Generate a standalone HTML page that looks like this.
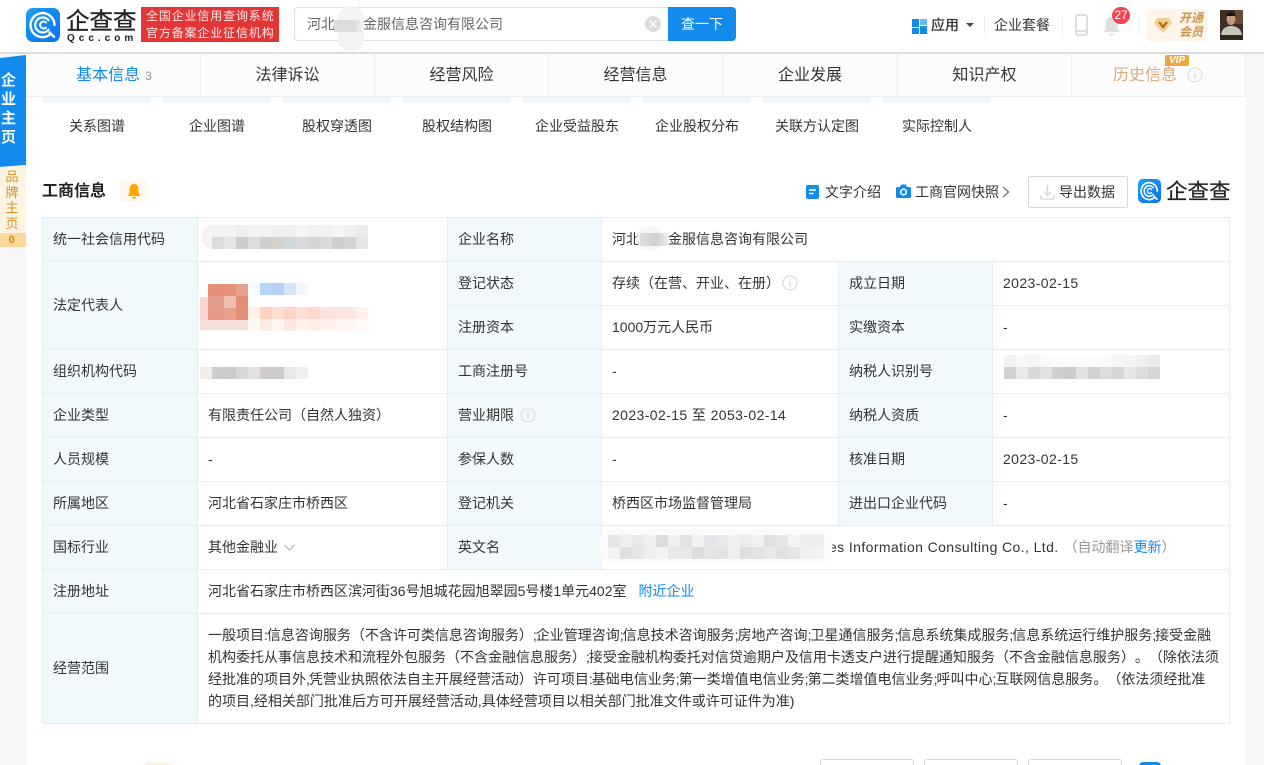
<!DOCTYPE html>
<html lang="zh-CN">
<head>
<meta charset="utf-8">
<title>工商信息</title>
<style>
*{box-sizing:border-box}
html,body{margin:0;padding:0;width:1264px;height:765px;overflow:hidden;background:#f6f6f6}
body{position:relative;font-family:"Liberation Sans","Noto Sans CJK SC",sans-serif;font-size:14px;color:#333;text-spacing-trim:space-all}
.a{position:absolute;white-space:nowrap}
.m{position:absolute;display:flex;flex-wrap:wrap;filter:blur(.3px)}
.m i{display:block;width:12px;height:12px}
#hd{position:absolute;left:0;top:0;width:1264px;height:54px;background:#fff;border-bottom:2px solid #dcdcdc}
#main{position:absolute;left:26px;top:54px;width:1220px;height:711px;background:#fff}
.tab{position:absolute;top:54px;height:43px;line-height:44px;text-align:center;font-size:16px;background:#fcfcfc;border-right:1px solid #eee;border-bottom:1px solid #eee}
.bar{position:absolute;top:97px;width:108px;height:6px;background:#f1f8fd}
.sub{position:absolute;top:116px;width:108px;text-align:center;line-height:20px;white-space:nowrap}
table{position:absolute;left:42px;top:217px;width:1187px;border-collapse:collapse;table-layout:fixed}
td{border:1px solid #e4eef6;height:44px;padding:0 10px 2px;line-height:22px;white-space:nowrap;overflow:visible}
td.l{background:#f2f9fc}
.lnk{color:#128bed}
.d{letter-spacing:.4px}
b.p{font-weight:normal;letter-spacing:-1px}
.btm{position:absolute;top:759px;height:8px;width:94px;background:#fff;border:1px solid #d8d8d8;border-radius:3px 3px 0 0}
</style>
</head>
<body>
<div id="main"></div>

<div id="hd"></div>
<svg class="a" style="left:26px;top:8px" width="34" height="34" viewBox="0 0 34 34">
<defs><linearGradient id="g" x1="0" y1="0" x2="1" y2="1"><stop offset="0" stop-color="#19a0f5"/><stop offset="1" stop-color="#0b6ff0"/></linearGradient></defs>
<rect width="34" height="34" rx="7" fill="url(#g)"/>
<path d="M24 26.500A12 12 0 1 1 28.500 17" fill="none" stroke="#fff" stroke-width="2.400" stroke-linecap="round"/>
<path d="M23.500 24.500l4.500 4.200" stroke="#fff" stroke-width="2.400" stroke-linecap="round"/>
<path d="M22.500 12.300A7.500 7.500 0 1 0 22.500 21.700" fill="none" stroke="#fff" stroke-width="2.200" stroke-linecap="round"/>
<path d="M20 14.500A3.500 3.500 0 1 0 20 19.500" fill="none" stroke="#fff" stroke-width="2" stroke-linecap="round"/>
</svg>
<div class="a" style="left:66px;top:5px;font-size:23.500px;line-height:32px;color:#222;-webkit-text-stroke:.3px #222">企查查</div>
<div class="a" style="left:67px;top:33px;font-size:10px;line-height:11px;font-weight:bold;letter-spacing:4px;color:#222">Qcc.com</div>
<div class="a" style="left:141px;top:7px;width:138px;height:35px;background:#e23636;color:#ffeaea;font-size:12px;line-height:17px;padding:1px 0 0 5px;letter-spacing:.85px">全国企业信用查询系统<br>官方备案企业征信机构</div>

<div class="a" style="left:294px;top:7px;width:374px;height:34px;border:1px solid #e0e0e0;border-right:0;border-radius:4px 0 0 4px;background:#fff"></div>
<div class="a" style="left:338px;top:6px;width:26px;height:46px;border-radius:13px;background:#f4f4f4"></div>
<div class="a" style="left:307px;top:14px;line-height:20px;color:#666">河北<span style="display:inline-block;width:28px"></span>金服信息咨询有限公司</div>
<div class="m" style="left:334px;top:20px;width:28px;height:12px;background:linear-gradient(90deg,#dcdcdc 70%,#eeeeee 100%)"></div>
<svg class="a" style="left:645px;top:16px" width="16" height="16" viewBox="0 0 16 16"><circle cx="8" cy="8" r="8" fill="#dcdcdc"/><path d="M5 5l6 6M11 5l-6 6" stroke="#fff" stroke-width="1.300"/></svg>
<div class="a" style="left:668px;top:7px;width:68px;height:34px;background:#128bed;border-radius:0 4px 4px 0;color:#fff;text-align:center;line-height:34px">查一下</div>

<svg class="a" style="left:912px;top:19px" width="15" height="15" viewBox="0 0 15 15"><rect width="7" height="8" fill="#128bed"/><rect x="8" width="7" height="6" fill="#6cb8f5"/><rect x="8" y="7" width="7" height="8" fill="#128bed"/><rect y="9" width="7" height="6" fill="#128bed"/></svg>
<div class="a" style="left:931px;top:15px;line-height:20px;color:#333;-webkit-text-stroke:.35px #333">应用</div>
<div class="a" style="left:966px;top:23px;width:0;height:0;border:4px solid transparent;border-top:4px solid #444;border-bottom:0"></div>
<div class="a" style="left:984px;top:16px;width:1px;height:18px;background:#eee"></div>
<div class="a" style="left:994px;top:15px;line-height:20px">企业套餐</div>
<div class="a" style="left:1062px;top:16px;width:1px;height:18px;background:#eee"></div>
<svg class="a" style="left:1075px;top:14px" width="13" height="22" viewBox="0 0 13 22"><rect x="1" y="1" width="11" height="20" rx="2" fill="#fff" stroke="#d6d6d6" stroke-width="1.600"/><path d="M1 17h11" stroke="#d6d6d6" stroke-width="1.600"/></svg>
<svg class="a" style="left:1102px;top:16px" width="19" height="20" viewBox="0 0 19 20"><path d="M9.500 1C5.500 1 3.500 4 3.500 8v5L1 16h17l-2.500-3V8C15.500 4 13.500 1 9.500 1z" fill="#dfdfdf"/><path d="M7 17.500h5a2.500 2 0 0 1-5 0z" fill="#dfdfdf"/></svg>
<div class="a" style="left:1112px;top:7px;width:18px;height:17px;border-radius:9px;background:#f0454e;color:#fff;font-size:12px;line-height:17px;text-align:center">27</div>
<div class="a" style="left:1138px;top:16px;width:1px;height:18px;background:#eee"></div>
<div class="a" style="left:1147px;top:9px;width:61px;height:32px;background:#fff5ea;border-radius:3px"></div>
<svg class="a" style="left:1154px;top:17px" width="18" height="16" viewBox="0 0 18 16"><path d="M3 1h12l3 5-9 10L0 6z" fill="#f5cf8e"/><path d="M5 5l4 5 4-5" fill="none" stroke="#a86a12" stroke-width="2.200"/></svg>
<div class="a" style="left:1177px;top:11px;width:28px;font-size:12px;line-height:14px;font-weight:bold;font-style:italic;color:#c9954b;text-align:center">开通<br>会员</div>
<svg class="a" style="left:1220px;top:10px" width="23" height="30" viewBox="0 0 23 30"><rect width="23" height="30" fill="#3f2e26"/><rect x="15" width="8" height="14" fill="#6b4a36"/><ellipse cx="11" cy="9" rx="4.500" ry="6" fill="#c49a7c"/><path d="M6 7c0-6 10-6 10 0l-1-1H7z" fill="#1d1512"/><path d="M1 26c0-7 5-10 10-10s11 3 11 10z" fill="#c4c6bc"/><path d="M0 25h23v5H0z" fill="#32261f"/></svg>

<svg class="a" style="left:0;top:54px" width="27" height="194" viewBox="0 0 27 194"><path d="M0 4L26 1v110l-26 2z" fill="#128bed"/><path d="M0 113l26-2v126H0z" fill="#fdf4e3"/></svg>
<div class="a" style="left:0;top:71px;width:17px;text-align:center;color:#fff;font-weight:bold;font-size:15px;line-height:19px;white-space:normal">企<br>业<br>主<br>页</div>
<div class="a" style="left:0;top:168px;width:26px;height:65px;background:#fdf4e3;text-align:center;color:#dd9022;font-size:13px;line-height:15.500px;white-space:normal;padding:1px 2px 0 0">品<br>牌<br>主<br>页</div>
<div class="a" style="left:0;top:233px;width:26px;height:14px;background:#fbd99d;text-align:center;color:#d98a13;font-size:11px;font-weight:bold;line-height:14px;padding-right:3px">0</div>
<div class="a" style="left:0;top:247px;width:26px;height:518px;background:#f6f6f6"></div>

<div class="tab" style="left:26px;width:175px;padding-left:2px"><span style="color:#128bed">基本信息</span><span style="color:#999;font-size:12px;margin-left:5px">3</span></div>
<div class="tab" style="left:201px;width:174px">法律诉讼</div>
<div class="tab" style="left:375px;width:174px">经营风险</div>
<div class="tab" style="left:549px;width:174px">经营信息</div>
<div class="tab" style="left:723px;width:175px">企业发展</div>
<div class="tab" style="left:898px;width:174px">知识产权</div>
<div class="tab" style="left:1072px;width:174px;color:#d9ab7c;text-align:left;padding-left:41px">历史信息</div>
<svg class="a" style="left:1187px;top:67px" width="16" height="16" viewBox="0 0 16 16"><circle cx="8" cy="8" r="7" fill="none" stroke="#e0e0e0" stroke-width="1.300"/><path d="M8 7v5M8 4v1.500" stroke="#dcdcdc" stroke-width="1.400"/></svg>
<div class="a" style="left:1165px;top:55px;width:24px;height:11px;background:#eda63f;border-radius:2px 2px 2px 0;color:#fff;font-size:10px;font-weight:bold;font-style:italic;line-height:11px;text-align:center">VIP</div>

<div class="bar" style="left:43px"></div><div class="bar" style="left:163px"></div><div class="bar" style="left:283px"></div><div class="bar" style="left:403px"></div><div class="bar" style="left:523px"></div><div class="bar" style="left:643px"></div><div class="bar" style="left:763px"></div><div class="bar" style="left:883px"></div>
<div class="sub" style="left:43px">关系图谱</div><div class="sub" style="left:163px">企业图谱</div><div class="sub" style="left:283px">股权穿透图</div><div class="sub" style="left:403px">股权结构图</div><div class="sub" style="left:523px">企业受益股东</div><div class="sub" style="left:643px">企业股权分布</div><div class="sub" style="left:763px">关联方认定图</div><div class="sub" style="left:883px">实际控制人</div>

<div class="a" style="left:42px;top:180px;font-size:16px;font-weight:bold;line-height:24px;color:#222">工商信息</div>
<div class="a" style="left:120px;top:180px;width:27px;height:22px;background:#fff8ec;border-radius:2px"></div>
<svg class="a" style="left:127px;top:184px" width="14" height="15" viewBox="0 0 14 15"><path d="M7 0C3.800 0 2.500 2.500 2.500 5.500V9L1 12h12l-1.500-3V5.500C11.500 2.500 10.200 0 7 0z" fill="#ffa500"/><path d="M5 12.800h4a2 2 0 0 1-4 0z" fill="#ffa500"/></svg>

<svg class="a" style="left:806px;top:185px" width="13" height="14" viewBox="0 0 13 14"><rect width="13" height="14" rx="2" fill="#128bed"/><path d="M3 5h7M3 8.500h4.500" stroke="#fff" stroke-width="1.400"/></svg>
<div class="a" style="left:825px;top:182px;line-height:20px">文字介绍</div>
<svg class="a" style="left:896px;top:184px" width="15" height="14" viewBox="0 0 15 14"><path d="M1.500 3H4l1-2.500h5L11 3h2.500A1.500 1.500 0 0 1 15 4.500v8a1.500 1.500 0 0 1-1.500 1.500h-12A1.500 1.500 0 0 1 0 12.500v-8A1.500 1.500 0 0 1 1.500 3z" fill="#128bed"/><circle cx="7.500" cy="8" r="2.800" fill="none" stroke="#fff" stroke-width="1.600"/></svg>
<div class="a" style="left:915px;top:182px;line-height:20px">工商官网快照</div>
<svg class="a" style="left:1002px;top:186px" width="8" height="12" viewBox="0 0 8 12"><path d="M1 1l5.500 5L1 11" fill="none" stroke="#555" stroke-width="1.100"/></svg>
<div class="a" style="left:1028px;top:176px;width:100px;height:32px;border:1px solid #d8d8d8;border-radius:2px;background:#fff"></div>
<svg class="a" style="left:1040px;top:184px" width="15" height="16" viewBox="0 0 15 16"><path d="M7.500 1v10M4 8l3.500 3.500L11 8" fill="none" stroke="#d4d4d4" stroke-width="1.300"/><path d="M1 11v4h13v-4" fill="none" stroke="#d4d4d4" stroke-width="1.300"/></svg>
<div class="a" style="left:1059px;top:182px;line-height:20px">导出数据</div>
<svg class="a" style="left:1138px;top:179px" width="23" height="24" viewBox="0 0 34 34" preserveAspectRatio="none">
<rect width="34" height="34" rx="7" fill="url(#g)"/>
<path d="M24 26.500A12 12 0 1 1 28.500 17" fill="none" stroke="#fff" stroke-width="2.400" stroke-linecap="round"/>
<path d="M23.500 24.500l4.500 4.200" stroke="#fff" stroke-width="2.400" stroke-linecap="round"/>
<path d="M22.500 12.300A7.500 7.500 0 1 0 22.500 21.700" fill="none" stroke="#fff" stroke-width="2.200" stroke-linecap="round"/>
<path d="M20 14.500A3.500 3.500 0 1 0 20 19.500" fill="none" stroke="#fff" stroke-width="2" stroke-linecap="round"/>
</svg>
<div class="a" style="left:1166px;top:177px;font-size:21.500px;line-height:30px;color:#222;-webkit-text-stroke:.2px #222">企查查</div>

<table>
<colgroup><col style="width:155px"><col style="width:250px"><col style="width:154px"><col style="width:237px"><col style="width:154px"><col style="width:237px"></colgroup>
<tr><td class="l">统一社会信用代码</td><td></td><td class="l">企业名称</td><td colspan="3">河北<span style="display:inline-block;width:28px"></span>金服信息咨询有限公司</td></tr>
<tr><td class="l" rowspan="2">法定代表人</td><td rowspan="2"></td><td class="l">登记状态</td><td>存续（在营、开业、在册）<svg style="vertical-align:-3px;margin-left:2px" width="16" height="16" viewBox="0 0 16 16"><circle cx="8" cy="8" r="7" fill="none" stroke="#ddd" stroke-width="1.300"/><path d="M8 7v5M8 4v1.500" stroke="#d8d8d8" stroke-width="1.400"/></svg></td><td class="l">成立日期</td><td class="d">2023-02-15</td></tr>
<tr><td class="l">注册资本</td><td>1000万元人民币</td><td class="l">实缴资本</td><td>-</td></tr>
<tr><td class="l">组织机构代码</td><td></td><td class="l">工商注册号</td><td>-</td><td class="l">纳税人识别号</td><td></td></tr>
<tr><td class="l">企业类型</td><td>有限责任公司（自然人独资）</td><td class="l">营业期限<svg style="vertical-align:-3px;margin-left:6px" width="16" height="16" viewBox="0 0 16 16"><circle cx="8" cy="8" r="7" fill="none" stroke="#ddd" stroke-width="1.300"/><path d="M8 7v5M8 4v1.500" stroke="#d8d8d8" stroke-width="1.400"/></svg></td><td class="d">2023-02-15 至 2053-02-14</td><td class="l">纳税人资质</td><td>-</td></tr>
<tr><td class="l">人员规模</td><td>-</td><td class="l">参保人数</td><td>-</td><td class="l">核准日期</td><td class="d">2023-02-15</td></tr>
<tr><td class="l">所属地区</td><td>河北省石家庄市桥西区</td><td class="l">登记机关</td><td>桥西区市场监督管理局</td><td class="l">进出口企业代码</td><td>-</td></tr>
<tr><td class="l">国标行业</td><td>其他金融业<svg style="margin-left:6px;vertical-align:1px" width="11" height="7" viewBox="0 0 11 7"><path d="M.5 1l5 5 5-5" fill="none" stroke="#aaa" stroke-width="1"/></svg></td><td class="l">英文名</td><td colspan="3" style="padding-left:227px"><span class="d">es Information Consulting Co., Ltd.</span><span style="color:#999;margin-left:5px">（自动翻译<span class="lnk">更新</span>）</span></td></tr>
<tr><td class="l">注册地址</td><td colspan="5">河北省石家庄市桥西区滨河街36号旭城花园旭翠园5号楼1单元402室<span class="lnk" style="margin-left:12px">附近企业</span></td></tr>
<tr><td class="l" style="height:110px">经营范围</td><td colspan="5" style="padding-right:0">一般项目<b class="p">:</b>信息咨询服务（不含许可类信息咨询服务）<b class="p">;</b>企业管理咨询<b class="p">;</b>信息技术咨询服务<b class="p">;</b>房地产咨询<b class="p">;</b>卫星通信服务<b class="p">;</b>信息系统集成服务<b class="p">;</b>信息系统运行维护服务<b class="p">;</b>接受金融<br>机构委托从事信息技术和流程外包服务（不含金融信息服务）<b class="p">;</b>接受金融机构委托对信贷逾期户及信用卡透支户进行提醒通知服务（不含金融信息服务）。（除依法须<br>经批准的项目外<b class="p">,</b>凭营业执照依法自主开展经营活动）许可项目<b class="p">:</b>基础电信业务<b class="p">;</b>第一类增值电信业务<b class="p">;</b>第二类增值电信业务<b class="p">;</b>呼叫中心<b class="p">;</b>互联网信息服务。（依法须经批准<br>的项目,经相关部门批准后方可开展经营活动,具体经营项目以相关部门批准文件或许可证件为准)</td></tr>
</table>

<!-- mosaics -->
<div class="a" style="left:202px;top:225px;width:12px;height:24px;background:#f4f4f2;border-radius:10px 0 0 10px"></div>
<div class="m" style="left:212px;top:225px;width:156px;height:24px">
<i style="background:#f3f3f3"></i><i style="background:#f3f3f3"></i><i style="background:#efefef"></i><i style="background:#f4f4f4"></i><i style="background:#f2f2f2"></i><i style="background:#efefef"></i><i style="background:#f0f0f0"></i><i style="background:#f5f5f5"></i><i style="background:#f1f1f1"></i><i style="background:#f2f2f2"></i><i style="background:#f5f5f5"></i><i style="background:#efefef"></i><i style="background:#ececec"></i>
<i style="background:#dcdbdd"></i><i style="background:#e6e6e6"></i><i style="background:#cdcdcd"></i><i style="background:#dedcde"></i><i style="background:#cfcfcf"></i><i style="background:#d4d0cc"></i><i style="background:#d0d8dc"></i><i style="background:#d9d9d9"></i><i style="background:#d2d4d6"></i><i style="background:#dcdadc"></i><i style="background:#cfcfcf"></i><i style="background:#d3d3d1"></i><i style="background:#e6e6e6"></i>
</div>
<div class="a" style="left:636px;top:226px;width:28px;height:24px;border-radius:12px;background:#f4f4f4;opacity:.8"></div>
<div class="a" style="left:640px;top:233px;width:28px;height:13px;background:linear-gradient(90deg,#dedede,#d0d0d0 60%,#eeeeee)"></div>

<div class="a" style="left:200px;top:297px;width:12px;height:24px;background:#f6d8cf"></div>
<div class="a" style="left:200px;top:319px;width:48px;height:11px;background:#f7ded7"></div>
<div class="m" style="left:208px;top:284px;width:40px">
<i style="background:#e88f78;width:16px"></i><i style="background:#e8917a"></i><i style="background:#e9a08c"></i>
<i style="background:#e59c8a;width:16px"></i><i style="background:#efc0b0"></i><i style="background:#e58c72"></i>
<i style="background:#e69a84;width:16px"></i><i style="background:#e8a08c"></i><i style="background:#e68e74"></i>
</div>
<div class="m" style="left:248px;top:283px;width:60px">
<i style="background:#f7faff"></i><i style="background:#b8d4f6"></i><i style="background:#b8d2f6"></i><i style="background:#d4e4fa"></i><i style="background:#f2f7fe"></i>
</div>
<div class="m" style="left:248px;top:307px;width:120px">
<i style="background:#fff0ea"></i><i style="background:#fed3c0"></i><i style="background:#fee0d4"></i><i style="background:#fed4c4"></i><i style="background:#fee0d8"></i><i style="background:#fed8cc"></i><i style="background:#fee2dc"></i><i style="background:#fee4de"></i><i style="background:#fee6e0"></i><i style="background:#fff0ec"></i>
<i style="background:#fff8f5"></i><i style="background:#feece4"></i><i style="background:#fff6f2"></i><i style="background:#fee8e2"></i><i style="background:#fff2ee"></i><i style="background:#ffeee8"></i><i style="background:#fff2ee"></i><i style="background:#fff4f0"></i><i style="background:#fff6f4"></i><i style="background:#fffaf8"></i>
</div>

<div class="m" style="left:200px;top:367px;width:108px">
<i style="background:#eeeeea"></i><i style="background:#cfcccd"></i><i style="background:#cbcbcd"></i><i style="background:#d8d6d8"></i><i style="background:#e2e0e2"></i><i style="background:#cfcbcd"></i><i style="background:#cdcccc"></i><i style="background:#e8e8e8"></i><i style="background:#f0f0f2"></i>
</div>

<div class="m" style="left:1004px;top:355px;width:156px">
<i style="background:#f2f0f0"></i><i style="background:#f8f8f8"></i><i style="background:#f6f6f6"></i><i style="background:#fafafa"></i><i style="background:#fcfcfc"></i><i style="background:#fcfcfc"></i><i style="background:#fcfcfc"></i><i style="background:#fcfcfc"></i><i style="background:#fafafa"></i><i style="background:#f6f6f6"></i><i style="background:#f4f4f4"></i><i style="background:#f0f0f0"></i><i style="background:#ececec"></i>
<i style="background:#d4d0d0"></i><i style="background:#e8e8ec"></i><i style="background:#d8d8d8"></i><i style="background:#e2e2e0"></i><i style="background:#cfcfcf"></i><i style="background:#cfcbcb"></i><i style="background:#e2e2e4"></i><i style="background:#d4d0d0"></i><i style="background:#dcdcdc"></i><i style="background:#d6d6d6"></i><i style="background:#e6e6e6"></i><i style="background:#dcdcdc"></i><i style="background:#d6d6d6"></i>
</div>

<div class="a" style="left:600px;top:529px;width:232px;height:36px;border-radius:14px;background:#fbfbfb"></div>
<div class="m" style="left:608px;top:535px;width:216px">
<i style="background:#e6e6e4"></i><i style="background:#efefef"></i><i style="background:#e8e8e8"></i><i style="background:#f0f0f0"></i><i style="background:#dcdcdc"></i><i style="background:#f0f0f0"></i><i style="background:#e4e4e4"></i><i style="background:#f2f2f2"></i><i style="background:#e4e6ea"></i><i style="background:#e8e8e8"></i><i style="background:#f0f0f0"></i><i style="background:#ececec"></i><i style="background:#f2f2f2"></i><i style="background:#e0e0e0"></i><i style="background:#e6e6e6"></i><i style="background:#f4f4f4"></i><i style="background:#eeeeee"></i><i style="background:#eeeeee"></i>
<i style="background:#f2f2f0"></i><i style="background:#e2dfe2"></i><i style="background:#e6e6e4"></i><i style="background:#eeeeee"></i><i style="background:#f4f4f4"></i><i style="background:#e8e8e6"></i><i style="background:#e6e8e4"></i><i style="background:#dcdcdc"></i><i style="background:#e4e6e6"></i><i style="background:#e0e4e6"></i><i style="background:#eeeeee"></i><i style="background:#dde0dc"></i><i style="background:#e4e4e2"></i><i style="background:#e8e8e8"></i><i style="background:#e2e0e2"></i><i style="background:#e6e6e6"></i><i style="background:#f0f0f0"></i><i style="background:#f2f2f2"></i>
</div>

<div class="btm" style="left:820px"></div><div class="btm" style="left:924px"></div><div class="btm" style="left:1028px"></div>
<div class="a" style="left:1139px;top:762px;width:22px;height:6px;background:#128bed;border-radius:4px 4px 0 0"></div>
<div class="a" style="left:145px;top:763px;width:28px;height:3px;background:#fff3d8"></div>
</body>
</html>
